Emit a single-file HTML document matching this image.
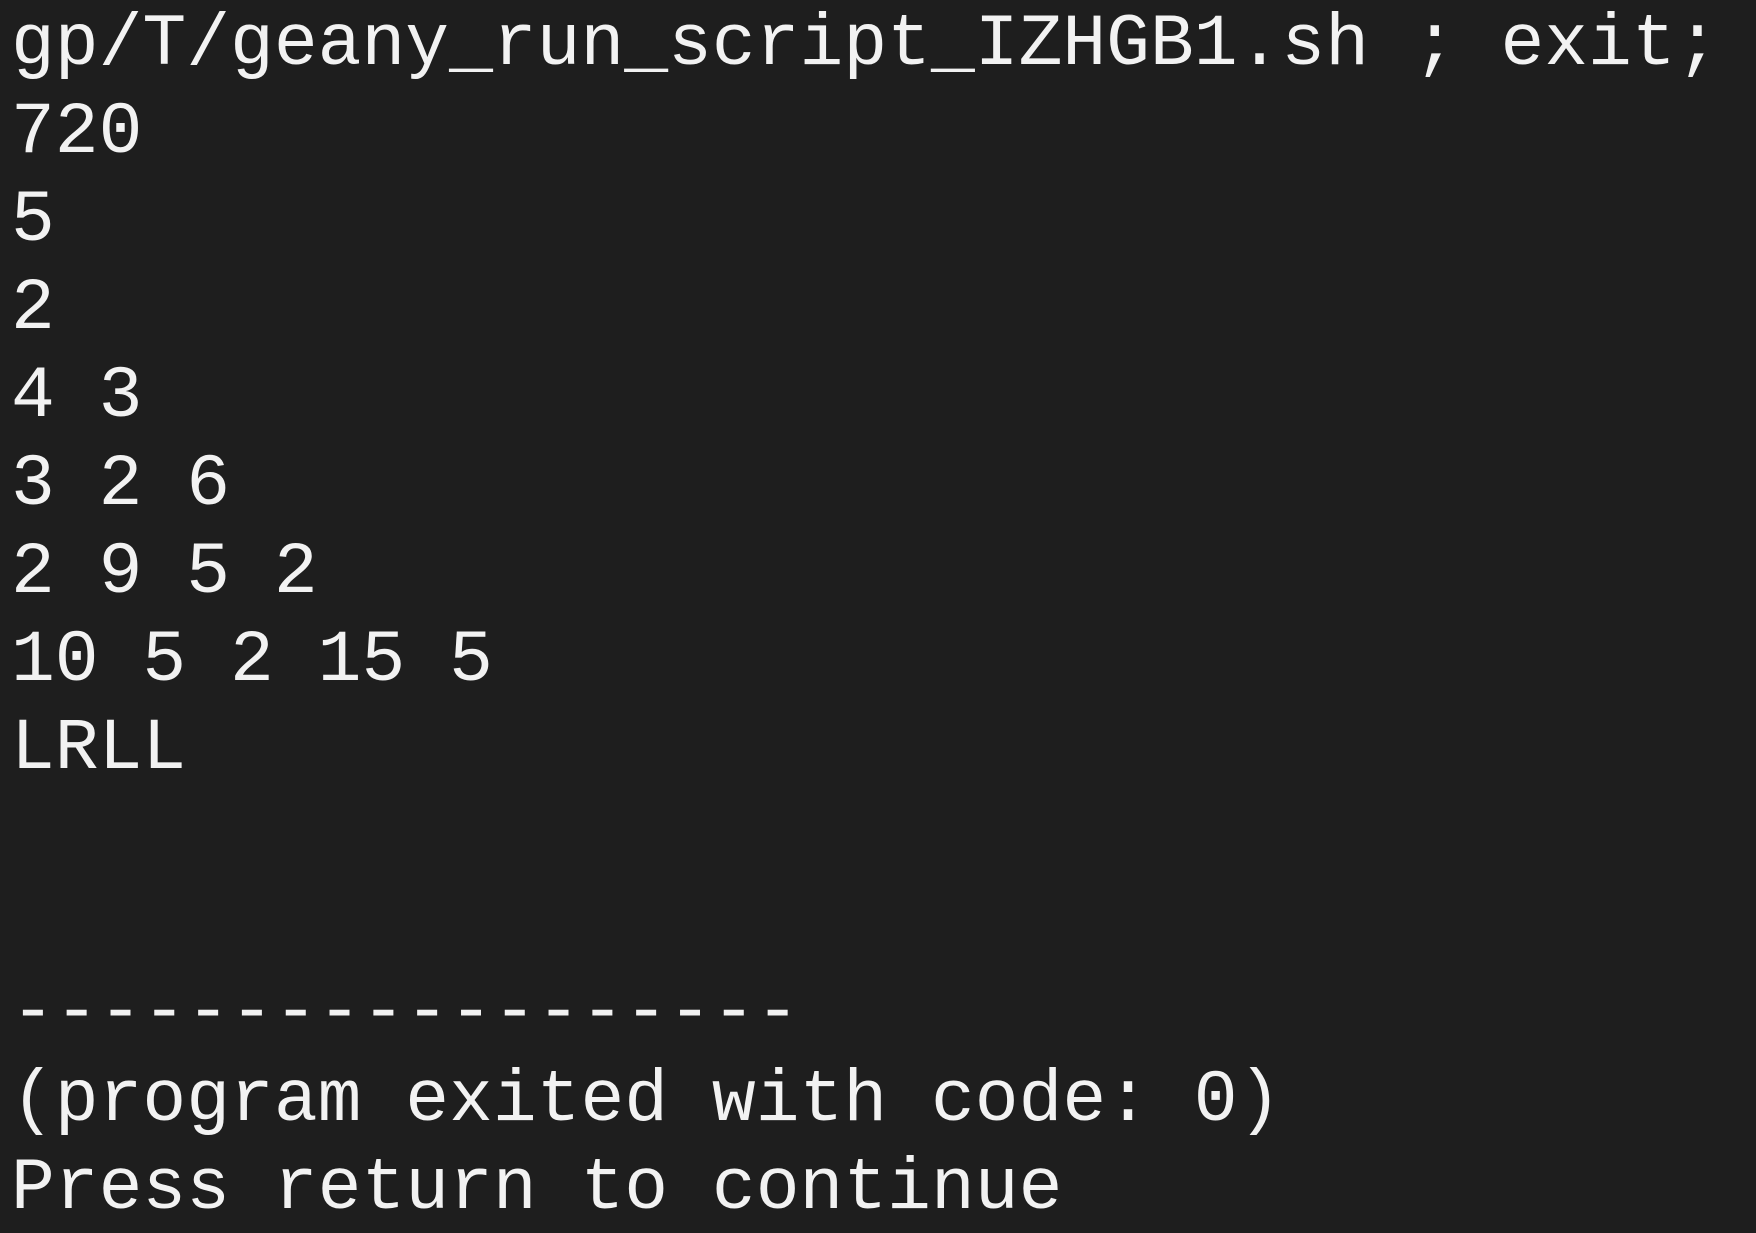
<!DOCTYPE html>
<html><head><meta charset="utf-8"><style>
html,body{margin:0;padding:0;background:#1e1e1e;width:1756px;height:1226px;overflow:hidden}
pre{position:absolute;left:11px;top:1px;margin:0;font-family:"Liberation Mono",monospace;font-size:73px;line-height:88px;color:#f2f2f2;white-space:pre}
</style></head><body><pre>gp/T/geany_run_script_IZHGB1.sh ; exit;
720
5
2
4 3
3 2 6
2 9 5 2
10 5 2 15 5
LRLL


------------------
(program exited with code: 0)
Press return to continue</pre></body></html>
